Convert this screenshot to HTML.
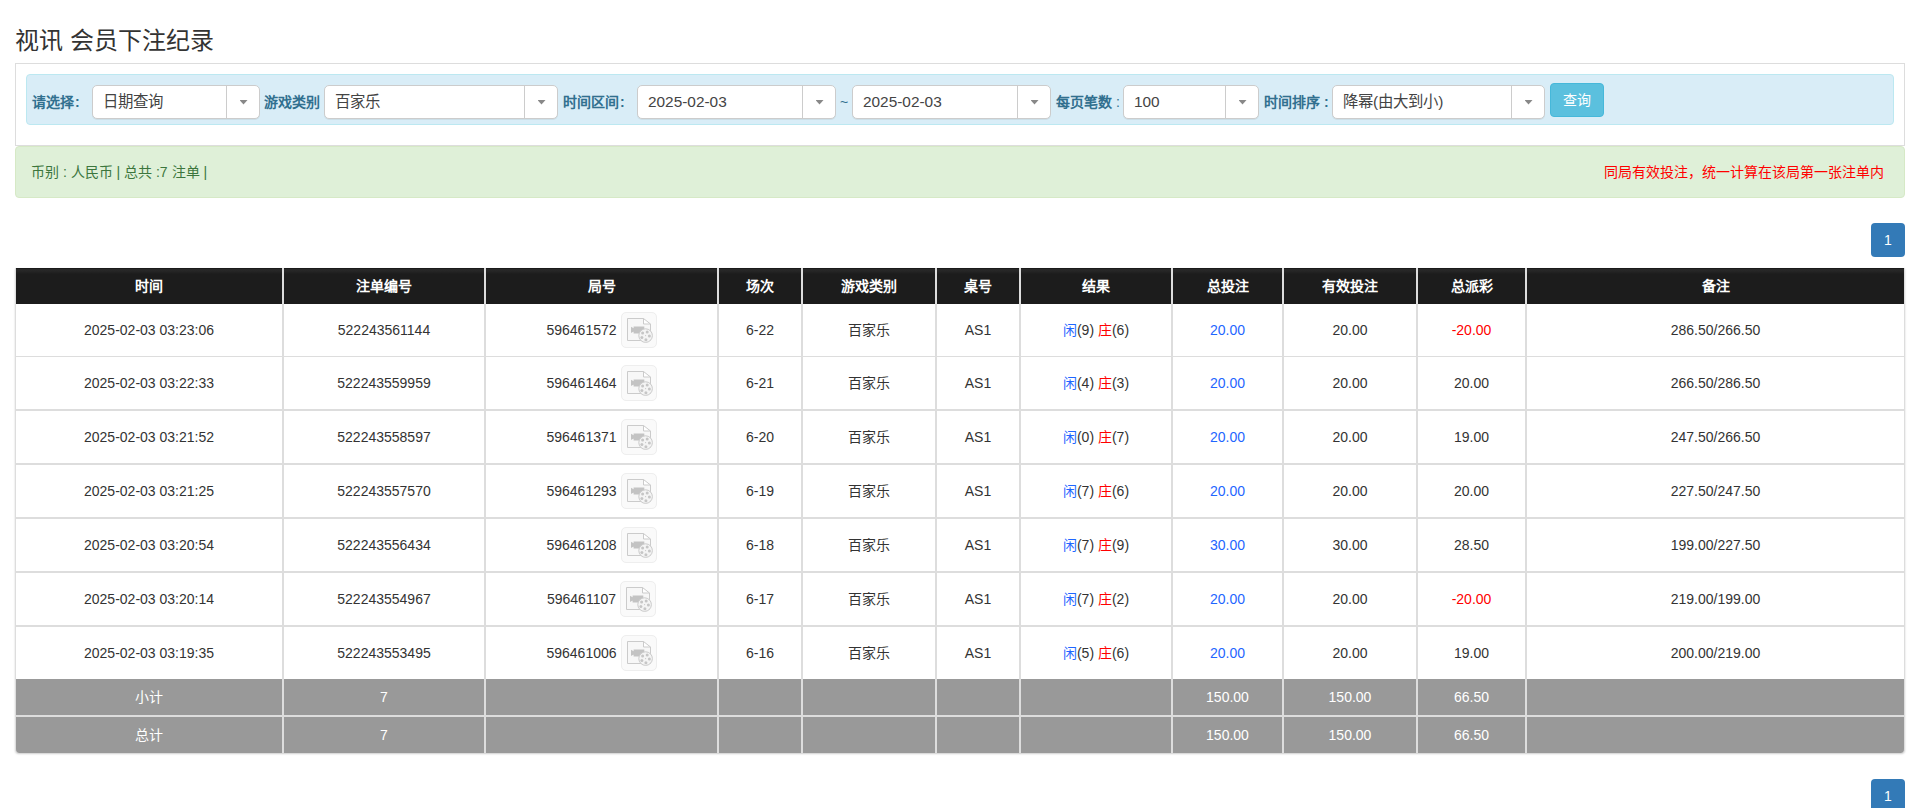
<!DOCTYPE html>
<html lang="zh-CN">
<head>
<meta charset="utf-8">
<title>视讯 会员下注纪录</title>
<style>
*{box-sizing:border-box;}
html,body{margin:0;padding:0;background:#fff;}
body{width:1919px;height:808px;overflow:hidden;position:relative;font-family:"Liberation Sans",sans-serif;font-size:14px;color:#333;line-height:20px;}
.abs{position:absolute;white-space:nowrap;}
h3.title{position:absolute;left:15px;top:24px;margin:0;font-size:24px;font-weight:normal;line-height:34px;color:#333;white-space:nowrap;}
.panel{position:absolute;left:15px;top:63px;width:1890px;height:83px;border:1px solid #ddd;background:#fff;}
.bar{position:absolute;left:26px;top:74px;width:1868px;height:51px;background:#d9edf7;border:1px solid #bce8f1;border-radius:4px;}
.lbl{position:absolute;top:92px;height:20px;line-height:20px;font-weight:bold;color:#31708f;font-size:14px;white-space:nowrap;}
.sel{position:absolute;top:85px;height:34px;border:1px solid #ccc;border-radius:5px;background:#fff;box-shadow:0 1px 0 rgba(0,0,0,.06);font-size:15.4px;color:#444;line-height:31px;padding-left:10px;white-space:nowrap;overflow:hidden;}
.sel i{position:absolute;right:32px;top:0;bottom:0;width:1px;background:#ccc;}
.sel b{position:absolute;right:11.5px;top:14px;width:8px;height:4.5px;background:#888;clip-path:polygon(0 0,100% 0,50% 100%);}
.btn{position:absolute;left:1550px;top:83px;width:54px;height:34px;background:#5bc0de;border:1px solid #46b8da;border-radius:4px;color:#fff;font-size:14px;line-height:32px;text-align:center;}
.green{position:absolute;left:15px;top:146px;width:1890px;height:52px;background:#dff0d8;border:1px solid #d6e9c6;border-radius:4px;}
.pg{position:absolute;left:1871px;width:34px;height:34px;background:#337ab7;border-radius:4px;color:#fff;font-size:14px;line-height:34px;text-align:center;}

table.t{position:absolute;left:15px;top:268px;width:1890px;table-layout:fixed;border-collapse:separate;border-spacing:0;font-size:14px;color:#333;box-shadow:0 1px 2px rgba(0,0,0,.2);border-radius:0 0 4px 4px;}
table.t th,table.t td{padding:0;text-align:center;vertical-align:middle;white-space:nowrap;border-left:1px solid #ddd;border-right:1px solid #ddd;}
table.t th{height:36px;background:#1c1c1c linear-gradient(#1b1b1b 0,#1b1b1b 1px,#282828 1px,#262626 3px,#1c1c1c 6px);color:#fff;font-weight:bold;}
table.t tbody td{height:54px;border-bottom:2px solid #ddd;background:#fff;}
table.t tr.r1 td{height:53px;border-bottom-width:1px;}
table.t tr.r7 td{height:52px;border-bottom:0;}
table.t tfoot td{background:#999;color:#fff;height:36px;}
table.t tr.f1 td{height:38px;border-bottom:2px solid #ddd;}
table.t tr.f2 td:first-child{border-bottom-left-radius:4px;}
table.t tr.f2 td:last-child{border-bottom-right-radius:4px;}
.bl{color:#1f66ff;}
.rd{color:#f00;}
td.bl{color:#1f66ff;} td.rd{color:#f00;}
.gn{display:inline-block;vertical-align:middle;}
.ic{display:inline-block;vertical-align:middle;width:36px;height:36px;margin-left:4px;border:1px solid #eee;border-radius:5px;background:#fafafa;padding:5px;}
.ic svg{display:block;overflow:visible;}
</style>
</head>
<body>
<svg width="0" height="0" style="position:absolute"><defs><symbol id="vid" viewBox="0 0 24 24" overflow="visible">
<path d="M0.5 0.5H16.5L23.5 6V22.5H0.5Z" fill="#f7f7f7"/>
<path d="M16.5 0.5V6H23.5Z" fill="#fff"/>
<path d="M0.5 0.5H16.5L23.5 6V22.5H0.5ZM16.5 0.5V6H23.5" fill="none" stroke="#cbcbcb" stroke-width="1"/>
<path d="M4 8.7L6.6 10.2V13.6L4 15.1ZM6.6 8.4H17.3V15.4H6.6Z" fill="#c3c3c3"/>
<circle cx="18.6" cy="17.6" r="6.8" fill="#f4f4f4" stroke="#cbcbcb" stroke-width="1"/>
<circle cx="15.6" cy="14.9" r="1.5" fill="#c6c6c6"/><circle cx="20.2" cy="14.1" r="1.5" fill="#c6c6c6"/><circle cx="22.4" cy="17.9" r="1.5" fill="#c6c6c6"/><circle cx="18.9" cy="21.7" r="1.5" fill="#c6c6c6"/><circle cx="14.9" cy="19.5" r="1.5" fill="#c6c6c6"/><circle cx="18.6" cy="17.6" r="0.6" fill="#c6c6c6"/>
</symbol></defs></svg>
<h3 class="title">视讯 会员下注纪录</h3>
<div class="panel"></div>
<div class="bar"></div>
<div class="lbl" style="left:32px;">请选择<span style="margin-left:1px">:</span></div>
<div class="sel" style="left:92px;width:168px;line-height:32px;">日期查询<i></i><b></b></div>
<div class="lbl" style="left:264px;">游戏类别</div>
<div class="sel" style="left:324px;width:234px;line-height:32px;">百家乐<i></i><b></b></div>
<div class="lbl" style="left:563px;">时间区间<span style="margin-left:1px">:</span></div>
<div class="sel" style="left:637px;width:199px;">2025-02-03<i></i><b></b></div>
<div class="lbl" style="left:840px;font-weight:normal;">~</div>
<div class="sel" style="left:852px;width:199px;">2025-02-03<i></i><b></b></div>
<div class="lbl" style="left:1056px;">每页笔数<span style="font-weight:normal"> :</span></div>
<div class="sel" style="left:1123px;width:136px;">100<i></i><b></b></div>
<div class="lbl" style="left:1264px;">时间排序 :</div>
<div class="sel" style="left:1332px;width:213px;line-height:32px;">降幂(由大到小)<i></i><b></b></div>
<div class="btn">查询</div>
<div class="green"></div>
<div class="abs" style="left:31px;top:162px;color:#3c763d;">币别 : 人民币 | 总共 :7 注单 |</div>
<div class="abs" style="right:35px;top:162px;color:#f00;">同局有效投注，统一计算在该局第一张注单内</div>
<div class="pg" style="top:223px;">1</div>
<div class="pg" style="top:779px;">1</div>
<!--TABLE-->
<table class="t"><colgroup><col style="width:268px"><col style="width:202px"><col style="width:233px"><col style="width:84px"><col style="width:134px"><col style="width:84px"><col style="width:152px"><col style="width:111px"><col style="width:134px"><col style="width:109px"><col style="width:379px"></colgroup>
<thead><tr><th>时间</th><th>注单编号</th><th>局号</th><th>场次</th><th>游戏类别</th><th>桌号</th><th>结果</th><th>总投注</th><th>有效投注</th><th>总派彩</th><th>备注</th></tr></thead><tbody>
<tr class="r1"><td>2025-02-03 03:23:06</td><td>522243561144</td><td><span class="gn">596461572</span><span class="ic"><svg width="24" height="24" viewBox="0 0 24 24"><use href="#vid"/></svg></span></td><td>6-22</td><td>百家乐</td><td>AS1</td><td><span class="bl">闲</span>(9) <span class="rd">庄</span>(6)</td><td class="bl">20.00</td><td>20.00</td><td class="rd">-20.00</td><td>286.50/266.50</td></tr>
<tr class="r2"><td>2025-02-03 03:22:33</td><td>522243559959</td><td><span class="gn">596461464</span><span class="ic"><svg width="24" height="24" viewBox="0 0 24 24"><use href="#vid"/></svg></span></td><td>6-21</td><td>百家乐</td><td>AS1</td><td><span class="bl">闲</span>(4) <span class="rd">庄</span>(3)</td><td class="bl">20.00</td><td>20.00</td><td>20.00</td><td>266.50/286.50</td></tr>
<tr class="r3"><td>2025-02-03 03:21:52</td><td>522243558597</td><td><span class="gn">596461371</span><span class="ic"><svg width="24" height="24" viewBox="0 0 24 24"><use href="#vid"/></svg></span></td><td>6-20</td><td>百家乐</td><td>AS1</td><td><span class="bl">闲</span>(0) <span class="rd">庄</span>(7)</td><td class="bl">20.00</td><td>20.00</td><td>19.00</td><td>247.50/266.50</td></tr>
<tr class="r4"><td>2025-02-03 03:21:25</td><td>522243557570</td><td><span class="gn">596461293</span><span class="ic"><svg width="24" height="24" viewBox="0 0 24 24"><use href="#vid"/></svg></span></td><td>6-19</td><td>百家乐</td><td>AS1</td><td><span class="bl">闲</span>(7) <span class="rd">庄</span>(6)</td><td class="bl">20.00</td><td>20.00</td><td>20.00</td><td>227.50/247.50</td></tr>
<tr class="r5"><td>2025-02-03 03:20:54</td><td>522243556434</td><td><span class="gn">596461208</span><span class="ic"><svg width="24" height="24" viewBox="0 0 24 24"><use href="#vid"/></svg></span></td><td>6-18</td><td>百家乐</td><td>AS1</td><td><span class="bl">闲</span>(7) <span class="rd">庄</span>(9)</td><td class="bl">30.00</td><td>30.00</td><td>28.50</td><td>199.00/227.50</td></tr>
<tr class="r6"><td>2025-02-03 03:20:14</td><td>522243554967</td><td><span class="gn">596461107</span><span class="ic"><svg width="24" height="24" viewBox="0 0 24 24"><use href="#vid"/></svg></span></td><td>6-17</td><td>百家乐</td><td>AS1</td><td><span class="bl">闲</span>(7) <span class="rd">庄</span>(2)</td><td class="bl">20.00</td><td>20.00</td><td class="rd">-20.00</td><td>219.00/199.00</td></tr>
<tr class="r7"><td>2025-02-03 03:19:35</td><td>522243553495</td><td><span class="gn">596461006</span><span class="ic"><svg width="24" height="24" viewBox="0 0 24 24"><use href="#vid"/></svg></span></td><td>6-16</td><td>百家乐</td><td>AS1</td><td><span class="bl">闲</span>(5) <span class="rd">庄</span>(6)</td><td class="bl">20.00</td><td>20.00</td><td>19.00</td><td>200.00/219.00</td></tr>
</tbody><tfoot>
<tr class="f1"><td>小计</td><td>7</td><td></td><td></td><td></td><td></td><td></td><td>150.00</td><td>150.00</td><td>66.50</td><td></td></tr>
<tr class="f2"><td>总计</td><td>7</td><td></td><td></td><td></td><td></td><td></td><td>150.00</td><td>150.00</td><td>66.50</td><td></td></tr>
</tfoot></table>
<!--/TABLE-->
</body>
</html>
